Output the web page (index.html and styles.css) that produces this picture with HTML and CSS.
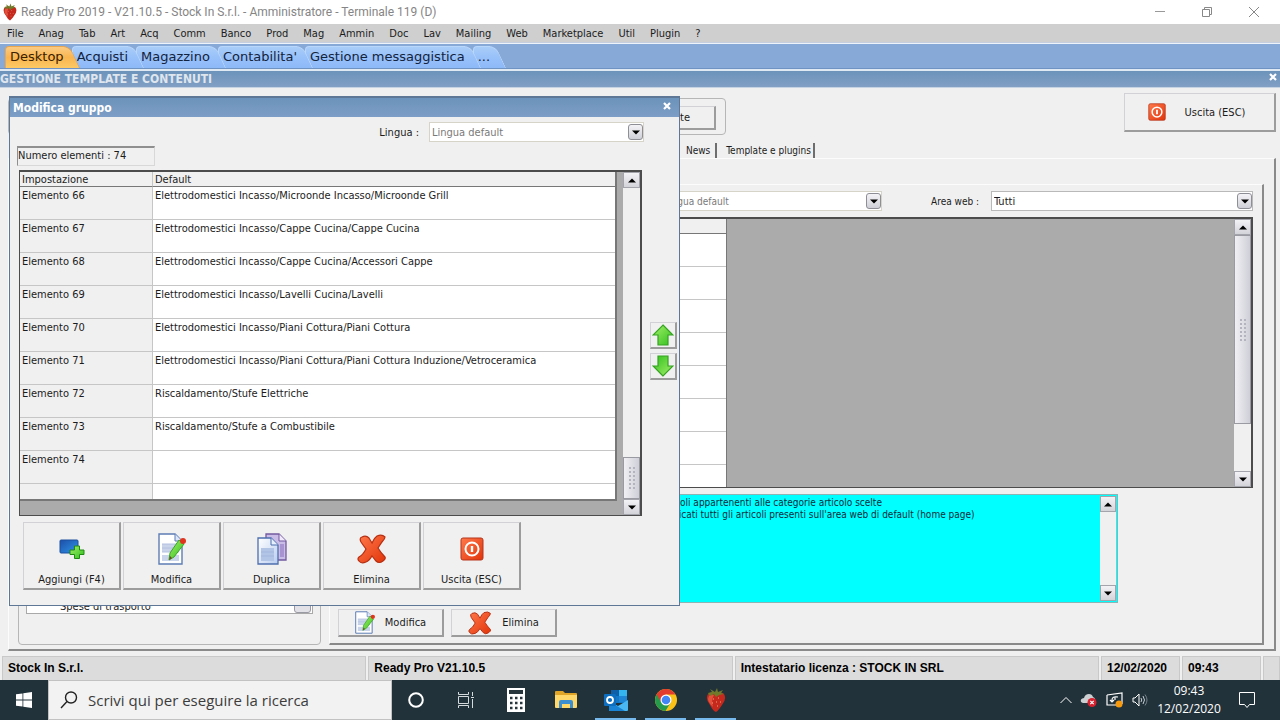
FILE: index.html
```html
<!DOCTYPE html>
<html lang="it">
<head>
  <meta charset="UTF-8">
  <meta name="viewport" content="width=device-width, initial-scale=1.0">
  <title>Ready Pro 2019</title>
  <link rel="stylesheet" href="styles.css">
</head>
<body>
  <!-- icone condivise -->
  <svg width="0" height="0" class="defs">
    <defs>
      <linearGradient id="g-red" x1="0" y1="0" x2="1" y2="1"><stop offset="0" stop-color="#ff7a4c"/><stop offset="1" stop-color="#e2340a"/></linearGradient>
      <linearGradient id="g-green" x1="0" y1="0" x2="1" y2="1"><stop offset="0" stop-color="#a5f06a"/><stop offset="1" stop-color="#2fbf1c"/></linearGradient>
      <linearGradient id="g-blue" x1="0" y1="0" x2="1" y2="1"><stop offset="0" stop-color="#1c4fa8"/><stop offset="1" stop-color="#2e95ea"/></linearGradient>
      <linearGradient id="g-page" x1="0" y1="0" x2="1" y2="1"><stop offset="0" stop-color="#ffffff"/><stop offset="1" stop-color="#b9cdf0"/></linearGradient>
      <symbol id="i-berry" viewBox="0 0 20 24">
        <path d="M2 6Q5 3 10 5Q15 3 18 6Q21 11 16 17Q12 23 10 24Q7 23 4 17Q-1 11 2 6Z" fill="#c5281c"/>
        <path d="M3 8Q5 6 8 7Q5 12 7 19Q0 13 3 8Z" fill="#e2503c"/>
        <path d="M2 5L6 4L4 1L9 4L11 0L12 4L17 2L15 5L18 6L13 7L10 9L8 6L4 8Z" fill="#6f7a2a"/>
        <path d="M7 11h1M12 10h1M10 14h1M6 15h1M14 14h1M11 18h1" stroke="#f0a080" stroke-width="1"/>
      </symbol>
      <symbol id="i-power" viewBox="0 0 24 24">
        <rect x="1" y="1" width="22" height="22" rx="2" fill="url(#g-red)" stroke="#b5341a"/>
        <circle cx="12" cy="12" r="6.5" fill="none" stroke="#fff" stroke-width="2"/>
        <path d="M12 9v6" stroke="#fff" stroke-width="2.4"/>
      </symbol>
      <symbol id="i-cross" viewBox="0 0 30 30">
        <path d="M5 3Q9 1 12 4L15 9Q17 4 20 2Q25 0 28 3Q28 5 25 8L21 14Q24 19 28 23Q29 25 26 27Q22 30 19 27L15 22Q12 27 9 28Q4 30 2 27Q0 25 2 23Q6 21 9 15Q6 11 4 8Q2 4 5 3Z" fill="url(#g-red)" stroke="#b52f12" stroke-width="1.2"/>
      </symbol>
      <symbol id="i-edit" viewBox="0 0 28 32">
        <path d="M1 1h16l7 7v23H1z" fill="#fff" stroke="#5d7db4" stroke-width="1.4"/>
        <path d="M17 1v7h7" fill="#dbe6fa" stroke="#5d7db4"/>
        <path d="M4 11h17v8H4zM4 22h17v6H4z" fill="#c9d3ea"/>
        <path d="M4 11h17M4 15h17M4 19h17" stroke="#b4c2e0"/>
        <path d="M21 7L26 11L16 24L11 27L12 20Z" fill="url(#g-green)" stroke="#3aa524"/>
        <path d="M11 27L12 23L14 25Z" fill="#6b4a20"/>
        <circle cx="25" cy="8" r="3" fill="#e0341c"/>
      </symbol>
      <symbol id="i-copy" viewBox="0 0 30 32">
        <path d="M9 1h13l7 7v19H9z" fill="#c9bce6" stroke="#73599f" stroke-width="1.3"/>
        <path d="M22 1v7h7" fill="#efe9fb" stroke="#73599f"/>
        <path d="M24 11v13M26 11v13" stroke="#9d86c9" stroke-width="1.5"/>
        <path d="M1 5h13l7 7v19H1z" fill="url(#g-page)" stroke="#4d6fae" stroke-width="1.3"/>
        <path d="M14 5v7h7" fill="#e6effd" stroke="#4d6fae"/>
        <path d="M4 15h13v13H4z" fill="#b3c5e6"/>
        <path d="M4 19h13M4 23h13" stroke="#a2b6dd"/>
      </symbol>
      <symbol id="i-add" viewBox="0 0 26 20">
        <rect x="1" y="1" width="18" height="13" rx="1" fill="url(#g-blue)" stroke="#1d4f9e"/>
        <path d="M15.500 7h5v4h4.500v4.500h-4.500v4h-5v-4H11V11h4.500z" fill="url(#g-green)" stroke="#1f8a12"/>
      </symbol>
      <symbol id="i-arrow" viewBox="0 0 22 22">
        <path d="M11 1L21 11H16V21H6V11H1Z" fill="url(#g-green)" stroke="#36a322" stroke-width="1.200"/>
      </symbol>
      <symbol id="i-tri" viewBox="0 0 8 5"><path d="M0 0.500H8L4 4.500Z" fill="#000"/></symbol>
      <symbol id="i-x" viewBox="0 0 8 8"><path d="M1 1L7 7M7 1L1 7" stroke="#fff" stroke-width="2.200"/></symbol>
    </defs>
  </svg>

  <header class="titlebar">
    <svg class="app-icon"><use href="#i-berry"/></svg>
    <h1>Ready Pro 2019 - V21.10.5 - Stock In S.r.l. - Amministratore - Terminale 119 (D)</h1>
    <div class="win-controls">
      <button aria-label="Riduci"><svg width="12" height="12"><path d="M1 5.500h10" stroke="#999"/></svg></button>
      <button aria-label="Ripristina"><svg width="12" height="12" fill="none" stroke="#888"><path d="M1.500 3.500h7v7h-7zM3.500 3.500v-2h7v7h-2"/></svg></button>
      <button aria-label="Chiudi"><svg width="12" height="12"><path d="M1 1l10 10M11 1L1 11" stroke="#888"/></svg></button>
    </div>
  </header>

  <nav class="menubar">
    <a href="#">File</a><a href="#">Anag</a><a href="#">Tab</a><a href="#">Art</a><a href="#">Acq</a><a href="#">Comm</a><a href="#">Banco</a><a href="#">Prod</a><a href="#">Mag</a><a href="#">Ammin</a><a href="#">Doc</a><a href="#">Lav</a><a href="#">Mailing</a><a href="#">Web</a><a href="#">Marketplace</a><a href="#">Util</a><a href="#">Plugin</a><a href="#">?</a>
  </nav>

  <nav class="tabs">
    <button class="tab active"><span>Desktop</span></button>
    <button class="tab"><span>Acquisti</span></button>
    <button class="tab"><span>Magazzino</span></button>
    <button class="tab"><span>Contabilita'</span></button>
    <button class="tab"><span>Gestione messaggistica</span></button>
    <button class="tab"><span>...</span></button>
  </nav>

  <div class="section-title">
    <h2>GESTIONE TEMPLATE E CONTENUTI</h2>
    <button class="close" aria-label="Chiudi sezione"><svg width="8" height="8"><use href="#i-x"/></svg></button>
  </div>

  <main class="workspace">
    <div class="toolbar">
      <div class="toolbar-group"><button class="btn btn-template">Template</button></div>
      <button class="btn btn-exit"><svg width="18" height="18"><use href="#i-power"/></svg>Uscita (ESC)</button>
    </div>
    <div class="page-tabs">
      <button>News</button>
      <button>Template e plugins</button>
    </div>

    <div class="page">
      <div class="tree-group">
        <div class="tree">
          <span class="tree-item">Spese di trasporto</span>
          <span class="tree-scroll"></span>
        </div>
      </div>

      <div class="detail">
        <div class="filters">
          <span class="combo combo-lang">
            <select aria-label="Lingua contenuti" disabled><option>Lingua default</option></select>
            <i><svg width="8" height="5"><use href="#i-tri"/></svg></i>
          </span>
          <label for="area">Area web :</label>
          <span class="combo combo-area">
            <select id="area"><option>Tutti</option></select>
            <i><svg width="8" height="5"><use href="#i-tri"/></svg></i>
          </span>
        </div>

        <div class="grid-box">
          <div class="grid-view">
            <table class="grid grid-back">
              <thead><tr><th></th></tr></thead>
              <tbody>
                <tr><td></td></tr><tr><td></td></tr><tr><td></td></tr><tr><td></td></tr>
                <tr><td></td></tr><tr><td></td></tr><tr><td></td></tr><tr class="cut"><td></td></tr>
              </tbody>
            </table>
          </div>
          <div class="scrollbar">
            <button class="up" aria-label="Su"><svg width="8" height="5"><use href="#i-tri"/></svg></button>
            <div class="track"><div class="thumb thumb-long"></div></div>
            <button aria-label="Giù"><svg width="8" height="5"><use href="#i-tri"/></svg></button>
          </div>
        </div>

        <div class="help">
          <div class="help-text">
            <p>Gli articoli appartenenti alle categorie articolo scelte</p>
            <p>e pubblicati tutti gli articoli presenti sull'area web di default (home page)</p>
          </div>
          <div class="scrollbar">
            <button class="up" aria-label="Su"><svg width="8" height="5"><use href="#i-tri"/></svg></button>
            <div class="track"></div>
            <button aria-label="Giù"><svg width="8" height="5"><use href="#i-tri"/></svg></button>
          </div>
        </div>

        <div class="detail-actions">
          <button class="btn"><svg width="20" height="23"><use href="#i-edit"/></svg>Modifica</button>
          <button class="btn"><svg width="24" height="24"><use href="#i-cross"/></svg>Elimina</button>
        </div>
      </div>
    </div>

    <!-- finestra Modifica gruppo -->
    <section class="dialog">
      <div class="dialog-title">
        <h3>Modifica gruppo</h3>
        <button class="close" aria-label="Chiudi finestra"><svg width="8" height="8"><use href="#i-x"/></svg></button>
      </div>
      <div class="dialog-lang">
        <label for="lingua">Lingua :</label>
        <span class="combo">
          <select id="lingua" disabled><option>Lingua default</option></select>
          <i><svg width="8" height="5"><use href="#i-tri"/></svg></i>
        </span>
      </div>
      <div class="counter">Numero elementi : 74</div>

      <div class="dialog-body">
        <div class="grid-box">
          <div class="grid-view">
            <table class="grid">
              <thead><tr><th class="name">Impostazione</th><th>Default</th></tr></thead>
              <tbody>
                <tr><td class="name">Elemento 66</td><td>Elettrodomestici Incasso/Microonde Incasso/Microonde Grill</td></tr>
                <tr><td class="name">Elemento 67</td><td>Elettrodomestici Incasso/Cappe Cucina/Cappe Cucina</td></tr>
                <tr><td class="name">Elemento 68</td><td>Elettrodomestici Incasso/Cappe Cucina/Accessori Cappe</td></tr>
                <tr><td class="name">Elemento 69</td><td>Elettrodomestici Incasso/Lavelli Cucina/Lavelli</td></tr>
                <tr><td class="name">Elemento 70</td><td>Elettrodomestici Incasso/Piani Cottura/Piani Cottura</td></tr>
                <tr><td class="name">Elemento 71</td><td>Elettrodomestici Incasso/Piani Cottura/Piani Cottura Induzione/Vetroceramica</td></tr>
                <tr><td class="name">Elemento 72</td><td>Riscaldamento/Stufe Elettriche</td></tr>
                <tr><td class="name">Elemento 73</td><td>Riscaldamento/Stufe a Combustibile</td></tr>
                <tr><td class="name">Elemento 74</td><td></td></tr>
                <tr class="cut"><td class="name"></td><td></td></tr>
              </tbody>
            </table>
          </div>
          <div class="scrollbar">
            <button class="up" aria-label="Su"><svg width="8" height="5"><use href="#i-tri"/></svg></button>
            <div class="track track-end"><div class="thumb"></div></div>
            <button aria-label="Giù"><svg width="8" height="5"><use href="#i-tri"/></svg></button>
          </div>
        </div>
        <div class="movers">
          <button class="btn" aria-label="Sposta su"><svg width="22" height="22"><use href="#i-arrow"/></svg></button>
          <button class="btn down" aria-label="Sposta giù"><svg width="22" height="22"><use href="#i-arrow"/></svg></button>
        </div>
      </div>

      <div class="dialog-actions">
        <button class="btn"><span class="pic"><svg width="26" height="20"><use href="#i-add"/></svg></span>Aggiungi (F4)</button>
        <button class="btn"><span class="pic"><svg width="28" height="32"><use href="#i-edit"/></svg></span>Modifica</button>
        <button class="btn"><span class="pic"><svg width="30" height="32"><use href="#i-copy"/></svg></span>Duplica</button>
        <button class="btn"><span class="pic"><svg width="30" height="30"><use href="#i-cross"/></svg></span>Elimina</button>
        <button class="btn"><span class="pic"><svg width="24" height="24"><use href="#i-power"/></svg></span>Uscita (ESC)</button>
      </div>
    </section>
  </main>

  <div class="statusbar">
    <span>Stock In S.r.l.</span>
    <span>Ready Pro V21.10.5</span>
    <span>Intestatario licenza : STOCK IN SRL</span>
    <span class="small">12/02/2020</span>
    <span class="small">09:43</span>
    <span class="grip"></span>
  </div>

  <footer class="taskbar">
    <button class="start" aria-label="Start"><svg width="16" height="16" fill="#fff"><path d="M0 2.300L6.500 1.400V7.600H0zM7.300 1.300L16 0V7.600H7.300zM0 8.400H6.500V14.600L0 13.700zM7.300 8.400H16V16L7.300 14.700z"/></svg></button>
    <div class="search">
      <svg width="18" height="18" fill="none" stroke="#222" stroke-width="1.400"><circle cx="11" cy="6.500" r="5.500"/><path d="M7 10.500L1 17"/></svg>
      <input type="text" aria-label="Cerca" placeholder="Scrivi qui per eseguire la ricerca">
    </div>
    <div class="apps">
      <button aria-label="Cortana"><svg width="18" height="18"><circle cx="9" cy="9" r="6.800" fill="none" stroke="#fff" stroke-width="2"/></svg></button>
      <button aria-label="Visualizzazione attività"><svg width="18" height="18" fill="none" stroke="#d5dadd"><path d="M1.500 1v2.500h10V1M1.500 5.500h10v7h-10zM1.500 17v-2.500h10V17M15.500 1v4M15.500 8v9M14 6.500h3"/></svg></button>
      <button aria-label="Calcolatrice"><svg width="18" height="24"><path d="M0 0h18v24H0z" fill="#fff"/><path d="M2 2h14v4H2z" fill="#26343c"/><path d="M3 10h2.500M8 10h2.500M13 10h2.500M3 15h2.500M8 15h2.500M13 15h2.500M3 20h2.500M8 20h2.500M13 20h2.500" stroke="#26343c" stroke-width="2.500"/></svg></button>
      <button aria-label="Esplora file"><svg width="22" height="20"><path d="M0 2q0-1 1-1h7l2 2h11q1 0 1 1v4H0z" fill="#e0a526"/><path d="M0 5h22v12q0 1-1 1H1q-1 0-1-1z" fill="#ffd869"/><path d="M4 18v-6q0-2 2-2h10q2 0 2 2v6h-3v-4H7v4z" fill="#3b8fd0"/></svg></button>
      <button class="open" aria-label="Outlook"><svg width="24" height="22"><path d="M7 1h16v13H7z" fill="#1478c8"/><path d="M7 1h8v6H7z" fill="#0f5ea8"/><path d="M15 1h8v6h-8z" fill="#35b5f0"/><path d="M15 7h8v6h-8z" fill="#1f86d6"/><path d="M5 12l9 5 10-6v10q0 1-1 1H6q-1 0-1-1z" fill="#4ab8f2"/><path d="M5 12l16 10H6q-1 0-1-1z" fill="#1b83d4"/><rect y="5" width="12" height="12" rx="1" fill="#0d6dbf"/><circle cx="6" cy="11" r="3" fill="none" stroke="#fff" stroke-width="1.800"/></svg></button>
      <button class="open" aria-label="Chrome"><svg width="22" height="22"><circle cx="11" cy="11" r="11" fill="#fbc116"/><path d="M1.500 5.500A11 11 0 0 0 10.500 22L15.700 13.500L11 11Z" fill="#249a4a"/><path d="M1.500 5.500A11 11 0 0 1 20.500 5.500H11L6 13Z" fill="#e33b2e"/><circle cx="11" cy="11" r="5.500" fill="#fff"/><circle cx="11" cy="11" r="4.300" fill="#4286f5"/></svg></button>
      <button class="open" aria-label="Ready Pro"><svg width="20" height="24"><use href="#i-berry"/></svg></button>
    </div>
    <div class="tray">
      <svg width="12" height="8" fill="none" stroke="#fff"><path d="M0.500 7L6 1.500L11.500 7"/></svg>
      <svg width="18" height="14"><path d="M3 10Q0 9 1 6.500Q2 5 4 5Q5 1 9 1Q12 1 13 4Q16 5 15 10Z" fill="#ccd0d3"/><circle cx="12" cy="9.500" r="4.500" fill="#d8202f"/><path d="M10.300 7.800l3.400 3.400M13.700 7.800l-3.400 3.400" stroke="#fff" stroke-width="1.200"/></svg>
      <svg width="18" height="16" fill="none" stroke="#fff" stroke-width="1.200"><path d="M1 3L16 1V12M1 3V13H10M12 5Q6 4 6 8V10M4 8l2 2 2-2M9 5v3"/><circle cx="13" cy="12" r="3.500" fill="#f79a0e" stroke="none"/></svg>
      <svg width="16" height="14" fill="none" stroke="#fff"><path d="M1 5h2l4-4v12l-4-4H1z"/><path d="M9 5q1.500 2 0 4M11 3q3 4 0 8" stroke="#c4ccd0"/><path d="M13 1.500q4 5.500 0 11" stroke="#75828a"/></svg>
      <div class="clock"><span>09:43</span><span>12/02/2020</span></div>
      <svg class="notes" width="18" height="18" fill="none" stroke="#fff"><path d="M1.500 1.500h15v12h-5L9 16.500l-2.500-3h-5z"/></svg>
    </div>
  </footer>
</body>
</html>
```
FILE: styles.css
```css
* {
  box-sizing: border-box;
}
body {
  margin: 0;
  min-height: 100vh;
  display: flex;
  flex-direction: column;
  background: #f0f0f0;
  color: #1c1c1c;
  font-family: "DejaVu Sans Condensed", "DejaVu Sans", sans-serif;
  font-size: 11px;
  line-height: 13px;
}
button, select, input {
  font: inherit;
  color: inherit;
}
button {
  border: 0;
  padding: 0;
  background: none;
}
h1, h2, h3, p {
  margin: 0;
}
svg {
  display: block;
  flex: none;
}
.defs {
  position: absolute;
}

/* barra del titolo */
.titlebar {
  display: flex;
  align-items: center;
  height: 24px;
  padding: 0 3px;
  gap: 4px;
  background: #fff;
}
.app-icon {
  width: 14px;
  height: 18px;
}
.titlebar h1 {
  flex: 1;
  font: 12px/16px Roboto, "Noto Sans", sans-serif;
  color: #858585;
}
.win-controls {
  display: flex;
}
.win-controls button {
  width: 47px;
  height: 22px;
  display: flex;
  align-items: center;
  justify-content: center;
}

.menubar {
  display: flex;
  gap: 15px;
  height: 19px;
  padding: 0 7px;
  background: #cfcfcf;
  border-bottom: 1px solid #c4cede;
}
.menubar a {
  color: #1c1c1c;
  text-decoration: none;
  line-height: 19px;
}

/* schede principali */
.tabs {
  display: flex;
  height: 26px;
  padding: 2px 5px 0;
  background: #87a9d8;
  border-top: 1px solid #eef3fa;
  border-bottom: 1px solid #6f94c4;
}
.tab {
  position: relative;
  z-index: 0;
  padding: 0 8px 0 5px;
  font: 13px/22px "DejaVu Sans", sans-serif;
  color: #14233c;
}
.tab:nth-child(1) { z-index: 6; }
.tab:nth-child(2) { z-index: 5; }
.tab:nth-child(3) { z-index: 4; }
.tab:nth-child(4) { z-index: 3; }
.tab:nth-child(5) { z-index: 2; }
.tab:nth-child(6) { z-index: 1; }
.tab span {
  position: relative;
  z-index: 1;
}
.tab::before, .tab::after {
  content: "";
  position: absolute;
  top: 0;
  bottom: 0;
  background: linear-gradient(#a9cdf8, #98c1fa 50%, #8db9f8);
  border: 1px solid #b9d6fb;
  border-bottom: 0;
}
.tab::before {
  left: 0;
  right: 8px;
  border-right: 0;
  border-radius: 4px 0 0 0;
}
.tab::after {
  right: -3px;
  width: 18px;
  border-left: 0;
  border-radius: 0 7px 0 0;
  transform: skewX(25deg);
}
.tab.active {
  color: #3a2000;
}
.tab.active::before, .tab.active::after {
  background: linear-gradient(#fbcb83, #f9b550 50%, #fdc964);
  border-color: #e9a64e;
}

.section-title {
  display: flex;
  justify-content: space-between;
  height: 19px;
  border-top: 2px solid #dfe9f4;
  border-bottom: 1px solid #c6d3e2;
  background: linear-gradient(#6c93bb, #829fc4);
}
.section-title h2, .dialog-title h3 {
  font-size: 12px;
  line-height: 16px;
  font-weight: bold;
  color: #dfe6ee;
}
.close {
  width: 15px;
  height: 12px;
  display: flex;
  align-items: center;
  justify-content: center;
}

/* area di lavoro */
.workspace {
  position: relative;
  flex: 1;
  display: flex;
  flex-direction: column;
  padding: 5px 4px 4px 8px;
}
.btn {
  display: flex;
  align-items: center;
  justify-content: center;
  background: #f0f0f0;
  border: 1px solid #d2d2d6;
  border-right: 2px solid #9c9c9c;
  border-bottom: 2px solid #9c9c9c;
}
.toolbar {
  display: flex;
  justify-content: space-between;
  align-items: flex-start;
}
.toolbar-group {
  margin-top: 5px;
  width: 718px;
  height: 37px;
  padding: 7px 9px;
  display: flex;
  justify-content: flex-end;
  border: 1px solid #b6b6b6;
  border-radius: 4px;
}
.btn-template {
  width: 96px;
  height: 24px;
}
.btn-exit {
  width: 152px;
  height: 39px;
  gap: 19px;
  padding-right: 6px;
}
.page-tabs {
  display: flex;
  height: 23px;
  padding: 8px 0 0 674px;
}
.page-tabs button {
  height: 15px;
  padding: 0 5px 0 4px;
  font-size: 10px;
  border-right: 2px solid #6e6e6e;
}
.page-tabs button + button {
  padding-left: 9px;
  padding-right: 2px;
}
.page {
  flex: 1;
  display: flex;
  gap: 8px;
  padding: 25px 10px 4px 9px;
  border: 1px solid #fcfcfc;
  border-right: 2px solid #8a8a8a;
  border-bottom: 2px solid #8a8a8a;
}
.tree-group {
  width: 303px;
  flex: none;
  display: flex;
  padding: 8px 7px 30px;
  border: 1px solid #b6b6b6;
  border-radius: 4px;
}
.tree {
  flex: 1;
  display: flex;
  align-items: flex-end;
  justify-content: space-between;
  padding: 0 1px 0 33px;
  background: #fff;
  border: 1px solid #a9a9a9;
}
.tree-scroll {
  width: 17px;
  height: 16px;
  border: 1px solid #9a9aa4;
  border-radius: 3px;
  background: #e1e1e7;
}
.detail {
  flex: 1;
  min-width: 0;
  display: flex;
  flex-direction: column;
  gap: 6px;
  padding: 6px 9px 6px 8px;
  border: 1px solid #fcfcfc;
  border-right: 2px solid #8a8a8a;
  border-bottom: 2px solid #8a8a8a;
}
.filters {
  display: flex;
  align-items: center;
  justify-content: flex-end;
}
.filters label {
  width: 60px;
  font-size: 10px;
}
.combo {
  position: relative;
  display: block;
  height: 20px;
}
.combo select {
  appearance: none;
  width: 100%;
  height: 100%;
  padding: 0 2px;
  border: 1px solid #b9b9b9;
  border-radius: 0;
  background: #fff;
  opacity: 1;
}
.combo select:disabled {
  color: #7a7a7a;
  border-color: #d6d3c8;
}
.combo i {
  position: absolute;
  top: 2px;
  right: 1px;
  width: 15px;
  height: 16px;
  display: flex;
  align-items: center;
  justify-content: center;
  border: 1px solid #8e8e96;
  border-radius: 3px;
  background: linear-gradient(#f4f4f7, #cfcfd8);
  pointer-events: none;
}
.combo-lang {
  width: 221px;
  margin-right: 49px;
}
.combo-lang select {
  font-size: 10px;
}
.combo-area {
  width: 262px;
}

/* griglie */
.grid-box {
  flex: 1;
  display: flex;
  background: #ababab;
  border: 2px solid #4c4c4c;
  border-left-width: 1px;
  border-bottom-width: 1px;
}
.grid-view {
  flex: 1;
}
.grid {
  border-collapse: separate;
  border-spacing: 0;
  width: 597px;
  table-layout: fixed;
  border-right: 2px solid #777;
  border-bottom: 2px solid #777;
}
.grid th {
  height: 15px;
  padding: 0 2px;
  font-weight: normal;
  text-align: left;
  background: #f0f0f0;
  border-bottom: 1px solid #777;
}
.grid td {
  height: 33px;
  padding: 2px 2px 0;
  vertical-align: top;
  background: #fff;
  border-bottom: 1px solid #c6c6c6;
}
.grid .name {
  width: 133px;
  background: #f0f0f0;
  border-right: 1px solid #c6c6c6;
}
.grid .cut td {
  height: 15px;
  border-bottom: 0;
}
.grid-back {
  width: 388px;
  border-right-width: 1px;
  border-bottom: 0;
}
.grid-back .cut td {
  height: 22px;
}
.scrollbar {
  width: 17px;
  display: flex;
  flex-direction: column;
  background: #f0f0f0;
}
.scrollbar button {
  height: 16px;
  display: flex;
  align-items: center;
  justify-content: center;
  border: 1px solid #a4a4ac;
  background: linear-gradient(#f3f3f6, #d3d3da);
}
.scrollbar .up svg {
  transform: rotate(180deg);
}
.track {
  flex: 1;
  display: flex;
  flex-direction: column;
}
.track-end {
  justify-content: flex-end;
}
.thumb {
  height: 42px;
  border: 1px solid #9a9aa2;
  background: linear-gradient(90deg, #f0f0f4, #cfcfd8);
  display: flex;
  align-items: center;
  justify-content: center;
}
.thumb::after {
  content: "";
  width: 8px;
  height: 24px;
  background: radial-gradient(circle, #b4b4be 1px, transparent 1px) 0 0 / 4px 4px;
}
.thumb-long {
  height: 189px;
}

.help {
  width: 780px;
  height: 109px;
  display: flex;
  padding: 1px;
  background: #00ffff;
  border: 1px solid #8cb4b4;
}
.help-text {
  flex: 1;
  padding: 1px 0 0 305px;
  font-size: 10px;
  line-height: 12px;
  color: #0b2b3a;
  white-space: nowrap;
}
.help .scrollbar {
  width: 16px;
}
.detail-actions {
  display: flex;
  gap: 7px;
}
.detail-actions .btn {
  width: 106px;
  height: 28px;
  gap: 10px;
}

/* finestra */
.dialog {
  position: absolute;
  z-index: 10;
  left: 9px;
  top: 8px;
  width: 671px;
  display: flex;
  flex-direction: column;
  padding-bottom: 15px;
  background: #f0f0f0;
  border: 1px solid #5f7797;
  border-top-width: 2px;
}
.dialog-title {
  display: flex;
  justify-content: space-between;
  padding: 2px 5px 1px 3px;
  background: linear-gradient(#6c93bb, #7d9ec6);
}
.dialog-title h3 {
  color: #fff;
}
.dialog-lang {
  display: flex;
  align-items: center;
  justify-content: flex-end;
  gap: 10px;
  padding: 5px 35px 4px 0;
}
.dialog-lang .combo {
  width: 215px;
}
.counter {
  width: 138px;
  height: 20px;
  margin-left: 7px;
  line-height: 16px;
  border: 1px solid #d8d8d8;
  border-top: 2px solid #8f8f8f;
  border-left-color: #8f8f8f;
}
.dialog-body {
  display: flex;
  gap: 8px;
  padding: 4px 2px 6px 9px;
}
.dialog-body .grid-box {
  height: 346px;
}
.movers {
  display: flex;
  flex-direction: column;
  justify-content: center;
  gap: 4px;
  padding-top: 16px;
}
.movers .btn {
  width: 27px;
  height: 27px;
}
.movers .down svg {
  transform: rotate(180deg);
}
.dialog-actions {
  display: flex;
  gap: 2px;
  padding-left: 13px;
}
.dialog-actions .btn {
  width: 98px;
  height: 68px;
  flex-direction: column;
  justify-content: flex-end;
  padding-bottom: 2px;
}
.pic {
  height: 48px;
  display: flex;
  align-items: center;
}

.statusbar {
  display: flex;
  gap: 2px;
  height: 25px;
  padding: 1px 0 0 2px;
  font: bold 12px/23px "Liberation Sans", Arial, sans-serif;
  color: #000;
}
.statusbar span {
  flex: 1;
  padding-left: 5px;
  background: #dcdcdc;
  border: 1px solid #c9c9c9;
  border-bottom: 0;
}
.statusbar .small {
  flex: none;
  width: 79px;
}
.statusbar .grip {
  flex: none;
  width: 17px;
}

/* barra delle applicazioni */
.taskbar {
  display: flex;
  align-items: center;
  height: 40px;
  background: #22323a;
  color: #fff;
}
.start {
  width: 48px;
  display: flex;
  justify-content: center;
}
.search {
  display: flex;
  align-items: center;
  gap: 10px;
  width: 344px;
  height: 40px;
  padding: 0 11px;
  background: #f2f2f2;
  border: 1px solid #c2c2c2;
}
.search input {
  flex: 1;
  min-width: 0;
  border: 0;
  padding: 0;
  background: none;
  font: 15px/20px "Open Sans", "Noto Sans", sans-serif;
}
.search input::placeholder {
  color: #3c3c3c;
  opacity: 1;
}
.apps {
  flex: 1;
  display: flex;
  gap: 9px;
  padding-left: 3px;
}
.apps button {
  width: 41px;
  height: 40px;
  display: flex;
  align-items: center;
  justify-content: center;
  border-top: 2px solid transparent;
  border-bottom: 2px solid transparent;
}
.apps .open {
  border-bottom-color: #76b9ed;
}
.tray {
  display: flex;
  align-items: center;
  gap: 8px;
  padding-right: 24px;
}
.clock {
  display: flex;
  flex-direction: column;
  align-items: center;
  width: 66px;
  font: 12px/18px "Open Sans", "Noto Sans", sans-serif;
}
.notes {
  margin-left: 8px;
}
```
